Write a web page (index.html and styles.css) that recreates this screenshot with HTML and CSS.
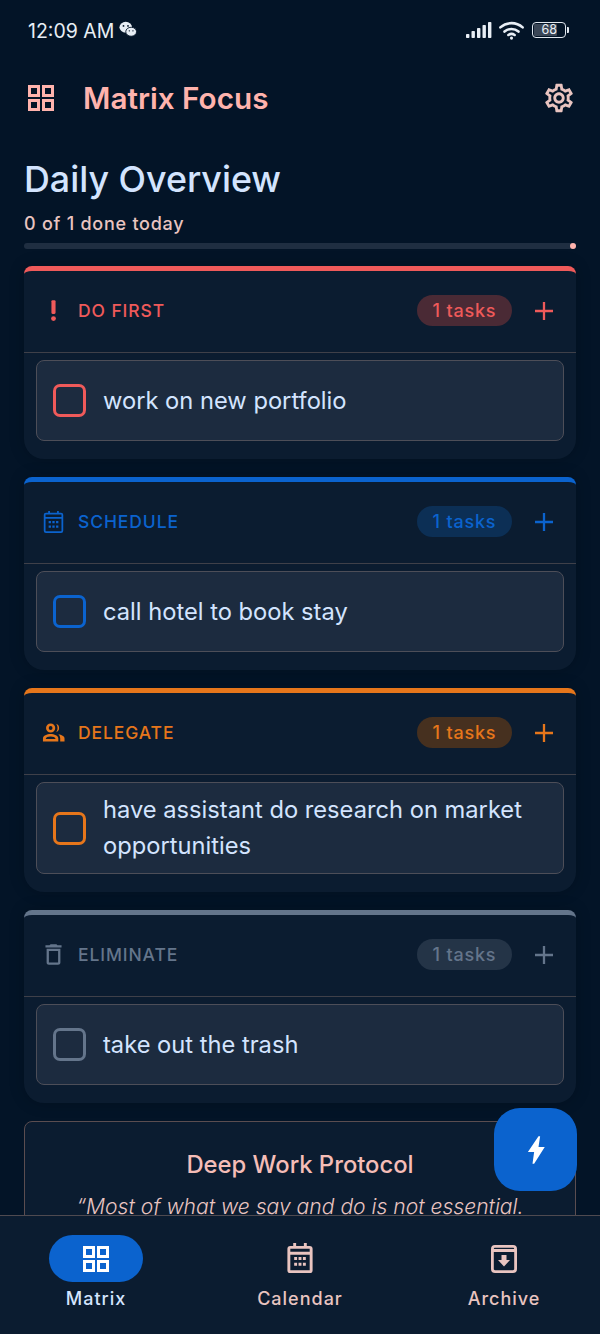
FILE: index.html
```html
<!DOCTYPE html>
<html lang="en">
<head>
<meta charset="utf-8">
<title>Matrix Focus</title>
<link rel="stylesheet" href="styles.css">
</head>
<body>
<div class="app">
  <div class="status">
    <div class="status-left">
      <span class="clock">12:09 AM</span>
      <svg class="wechat" viewBox="0 0 20 18"><ellipse cx="7.500" cy="6.500" rx="7" ry="6" fill="currentColor"/><ellipse cx="13.500" cy="11.500" rx="6" ry="5" fill="currentColor" stroke="#031427" stroke-width="1"/><circle cx="5" cy="5" r="1" fill="#031427"/><circle cx="10" cy="5" r="1" fill="#031427"/><circle cx="11.500" cy="10.500" r=".8" fill="#031427"/><circle cx="15.500" cy="10.500" r=".8" fill="#031427"/></svg>
    </div>
    <div class="status-right">
      <svg class="signal" viewBox="0 0 26 16"><rect x="0" y="12" width="3.400" height="4" rx=".8"/><rect x="5.500" y="9" width="3.400" height="7" rx=".8"/><rect x="11" y="6" width="3.400" height="10" rx=".8"/><rect x="16.500" y="3" width="3.400" height="13" rx=".8"/><rect x="22" y="0" width="3.400" height="16" rx=".8"/></svg>
      <svg class="wifi" viewBox="0 0 24 18" fill="none" stroke="currentColor" stroke-width="2.500" stroke-linecap="round"><path d="M1.300 6C7.500 .6 16.500 .6 22.700 6"/><path d="M5.300 10c3.800-3.300 9.600-3.300 13.400 0"/><path d="M9 13.300c1.900-1.300 4.100-1.300 6 0"/><circle cx="12" cy="16.300" r="1.500" fill="currentColor" stroke="none"/></svg>
      <div class="battery"><span class="battery-level">68</span></div>
      <span class="battery-tip"></span>
    </div>
  </div>

  <header class="topbar">
    <svg class="logo" viewBox="0 0 28 28"><path fill-rule="evenodd" d="M1 1h12v12H1zm3 3v6h6V4zM15 1h12v12H15zm3 3v6h6V4zM1 15h12v12H1zm3 3v6h6v-6zM15 15h12v12H15zm3 3v6h6v-6z"/></svg>
    <h1 class="brand">Matrix Focus</h1>
    <svg class="gear" viewBox="0 0 24 24"><path d="M19.430 12.980c.04-.32.07-.64.07-.98 0-.34-.03-.66-.07-.98l2.110-1.650c.19-.15.24-.42.12-.64l-2-3.460c-.09-.16-.26-.25-.44-.25-.06 0-.12.01-.17.03l-2.490 1c-.52-.4-1.080-.73-1.690-.98l-.38-2.650C14.460 2.180 14.250 2 14 2h-4c-.25 0-.46.18-.49.42l-.38 2.650c-.61.25-1.170.59-1.690.98l-2.490-1c-.06-.02-.12-.03-.18-.03-.17 0-.34.09-.43.25l-2 3.460c-.13.22-.07.49.12.64l2.110 1.650c-.04.32-.07.65-.07.98 0 .33.03.66.07.98l-2.110 1.650c-.19.15-.24.42-.12.64l2 3.460c.09.16.26.25.44.25.06 0 .12-.01.17-.03l2.490-1c.52.4 1.080.73 1.690.98l.38 2.650c.03.24.24.42.49.42h4c.25 0 .46-.18.49-.42l.38-2.650c.61-.25 1.170-.59 1.690-.98l2.490 1c.06.02.12.03.18.03.17 0 .34-.09.43-.25l2-3.460c.12-.22.07-.49-.12-.64l-2.110-1.650zm-1.980-1.710c.04.31.05.52.05.73 0 .21-.02.43-.05.73l-.14 1.130.89.7 1.080.84-.7 1.210-1.270-.51-1.040-.42-.9.68c-.43.32-.84.56-1.250.73l-1.060.43-.16 1.130-.2 1.350h-1.400l-.19-1.350-.16-1.130-1.060-.43c-.43-.18-.83-.41-1.230-.71l-.91-.7-1.060.43-1.270.51-.7-1.210 1.080-.84.89-.7-.14-1.130c-.03-.31-.05-.54-.05-.74s.02-.43.05-.73l.14-1.130-.89-.7-1.080-.84.7-1.210 1.270.51 1.040.42.9-.68c.43-.32.84-.56 1.250-.73l1.060-.43.16-1.130.2-1.350h1.390l.19 1.350.16 1.130 1.060.43c.43.18.83.41 1.230.71l.91.7 1.060-.43 1.270-.51.7 1.210-1.070.85-.89.7.14 1.130zM12 8c-2.210 0-4 1.790-4 4s1.790 4 4 4 4-1.790 4-4-1.790-4-4-4zm0 6c-1.100 0-2-.9-2-2s.9-2 2-2 2 .9 2 2-.9 2-2 2z"/></svg>
  </header>

  <main class="content">
    <h2 class="overview">Daily Overview</h2>
    <p class="done">0 of 1 done today</p>
    <div class="progress"><span class="progress-dot"></span></div>

    <section class="card red">
      <div class="card-head">
        <svg class="cat-icon" viewBox="0 0 20 20"><rect x="8.200" y="1" width="3.600" height="12" rx="1"/><circle cx="10" cy="17" r="2.100"/></svg>
        <span class="cat-title">DO FIRST</span>
        <span class="count">1 tasks</span>
        <svg class="plus" viewBox="0 0 20 20"><path d="M10 1v18M1 10h18"/></svg>
      </div>
      <div class="task"><span class="check"></span><span class="task-text">work on new portfolio</span></div>
    </section>

    <section class="card blue">
      <div class="card-head">
        <svg class="cat-icon" viewBox="0 0 24 26"><path fill-rule="evenodd" d="M6 1h2v2h8V1h2v2h2.500A2.500 2.500 0 0 1 23 5.500v18a2.500 2.500 0 0 1-2.500 2.500h-17A2.500 2.500 0 0 1 1 23.500v-18A2.500 2.500 0 0 1 3.500 3H6zM3.500 5c-.3 0-.5.2-.5.5V8h18V5.500c0-.3-.2-.5-.5-.5zM3 10v13.500c0 .3.2.5.5.5h17c.3 0 .5-.2.5-.5V10zm3.500 2.500h2.600v2.600H6.500zm4.200 0h2.600v2.600h-2.600zm4.200 0h2.600v2.600h-2.600zM6.500 17.500h2.600v2.600H6.500zm4.200 0h2.600v2.600h-2.600zm4.200 0h2.600v2.600h-2.600z"/></svg>
        <span class="cat-title">SCHEDULE</span>
        <span class="count">1 tasks</span>
        <svg class="plus" viewBox="0 0 20 20"><path d="M10 1v18M1 10h18"/></svg>
      </div>
      <div class="task"><span class="check"></span><span class="task-text">call hotel to book stay</span></div>
    </section>

    <section class="card orange">
      <div class="card-head">
        <svg class="cat-icon" viewBox="0 0 24 20"><path fill-rule="evenodd" d="M9 .5a4.800 4.800 0 1 1 0 9.600A4.800 4.800 0 0 1 9 .5zm0 2.800a2 2 0 1 0 0 4 2 2 0 0 0 0-4zM9 11.500c3.800 0 8 1.900 8 4.500v3.500H1V16c0-2.600 4.200-4.500 8-4.500zm0 2.800c-2.700 0-4.700 1-5 1.900v.6h10v-.6c-.3-.9-2.300-1.900-5-1.900z"/><path d="M14.800.9a4.700 4.700 0 0 1 0 8.800c.9-1.200 1.400-2.800 1.400-4.400s-.5-3.200-1.400-4.400zM17 11.800c3.300.5 6.500 1.900 6.500 4.300v3.400H19V16c0-1.600-.8-3.100-2-4.200z"/></svg>
        <span class="cat-title">DELEGATE</span>
        <span class="count">1 tasks</span>
        <svg class="plus" viewBox="0 0 20 20"><path d="M10 1v18M1 10h18"/></svg>
      </div>
      <div class="task"><span class="check"></span><span class="task-text">have assistant do research on market opportunities</span></div>
    </section>

    <section class="card gray">
      <div class="card-head">
        <svg class="cat-icon" viewBox="2 2 20 20"><path d="M6 19c0 1.100.9 2 2 2h8c1.100 0 2-.9 2-2V7H6v12zM8 9h8v10H8V9zm7.500-5l-1-1h-5l-1 1H5v2h14V4z"/></svg>
        <span class="cat-title">ELIMINATE</span>
        <span class="count">1 tasks</span>
        <svg class="plus" viewBox="0 0 20 20"><path d="M10 1v18M1 10h18"/></svg>
      </div>
      <div class="task"><span class="check"></span><span class="task-text">take out the trash</span></div>
    </section>

    <section class="protocol">
      <h3 class="protocol-title">Deep Work Protocol</h3>
      <p class="quote">“Most of what we say and do is not essential.</p>
    </section>
  </main>

  <button class="fab" type="button" aria-label="Focus">
    <svg viewBox="0 0 24 24"><path d="M10.500 23h-1.300l1.300-9.500H5.500L14 1h1.300l-1.300 8.500h5z"/></svg>
  </button>

  <nav class="nav">
    <div class="nav-item active">
      <span class="nav-pill"><svg class="nav-icon" viewBox="0 0 28 28"><path fill-rule="evenodd" d="M1 1h12v12H1zm3 3v6h6V4zM15 1h12v12H15zm3 3v6h6V4zM1 15h12v12H1zm3 3v6h6v-6zM15 15h12v12H15zm3 3v6h6v-6z"/></svg></span>
      <span class="nav-label">Matrix</span>
    </div>
    <div class="nav-item">
      <span class="nav-pill"><svg class="nav-icon tall" viewBox="0 0 28 32"><path fill-rule="evenodd" d="M7 0h3v3h8V0h3v3h3a3 3 0 0 1 3 3v22a3 3 0 0 1-3 3H4a3 3 0 0 1-3-3V6a3 3 0 0 1 3-3h3zM4 6v3h20V6zm0 6v16h20V12zm4 2.500h3v3H8zm4.500 0h3v3h-3zm4.500 0h3v3h-3zM8 20.500h3v3H8zm4.500 0h3v3h-3zm4.500 0h3v3h-3z"/></svg></span>
      <span class="nav-label">Calendar</span>
    </div>
    <div class="nav-item">
      <span class="nav-pill"><svg class="nav-icon" viewBox="0 0 28 28"><path fill-rule="evenodd" d="M5 0h18a4 4 0 0 1 4 4v20a4 4 0 0 1-4 4H5a4 4 0 0 1-4-4V4a4 4 0 0 1 4-4zM3.800 7v17c0 .7.500 1.200 1.200 1.200h18c.7 0 1.200-.5 1.200-1.200V7zM5 2.800c-.6 0-1.100.4-1.200 1.200h20.400c-.1-.8-.6-1.200-1.200-1.200zM11.500 10h5v5H20l-6 6.500L8 15h3.500z"/></svg></span>
      <span class="nav-label">Archive</span>
    </div>
  </nav>
</div>
</body>
</html>
```

FILE: styles.css
```css
* { box-sizing: border-box; }
html, body { margin: 0; padding: 0; }
body {
  width: 600px;
  height: 1334px;
  overflow: hidden;
  background: #031427;
  font-family: Inter, "Liberation Sans", sans-serif;
}
.app {
  position: relative;
  width: 600px;
  height: 1334px;
  display: flex;
  flex-direction: column;
  background: #031427;
}

/* status bar */
.status {
  flex: none;
  height: 60px;
  padding: 0 31px 0 28px;
  display: flex;
  align-items: center;
  justify-content: space-between;
  color: #e6edf5;
}
.status-left { display: flex; align-items: center; gap: 5px; }
.clock { margin-top: 2px; font-size: 19.500px; font-weight: 400; color: #e8eef5; }
.wechat { width: 18px; height: 17px; margin-bottom: 2px; color: #e8eef5; }
.status-right { display: flex; align-items: center; }
.signal { width: 26px; height: 16px; fill: #e8eef5; }
.wifi { width: 25px; height: 19px; margin-left: 7px; color: #e8eef5; }
.battery {
  width: 34px;
  height: 16px;
  margin-left: 8px;
  padding: 1px;
  border: 1.500px solid #e0e7ef;
  border-radius: 4px;
  display: flex;
}
.battery-level {
  width: 23px;
  background: #3a4656;
  border-radius: 1px;
  font-size: 12.500px;
  line-height: 11px;
  color: #e8eef5;
  text-align: right;
  flex: none;
}
.battery-tip {
  width: 2px;
  height: 6px;
  margin-left: 1px;
  background: #e0e7ef;
  border-radius: 0 1px 1px 0;
}

/* top bar */
.topbar {
  flex: none;
  height: 76px;
  padding: 0 24px 0 27px;
  display: flex;
  align-items: center;
}
.logo { width: 28px; height: 28px; fill: #ffb3ad; flex: none; }
.brand {
  margin: 0 0 0 28px;
  flex: 1;
  font-size: 29.700px;
  line-height: 36px;
  font-weight: 600;
  color: #ffb3ad;
}
.gear { width: 34px; height: 34px; fill: #e9c4c0; flex: none; }

/* scrolling content */
.content {
  flex: 1;
  min-height: 0;
  overflow: hidden;
  padding: 0 24px;
}
.overview {
  margin: 21px 0 0;
  font-size: 35.800px;
  line-height: 44px;
  font-weight: 500;
  color: #d3e4fe;
}
.done {
  margin: 11px 0 0;
  font-size: 18px;
  line-height: 24px;
  font-weight: 500;
  letter-spacing: 0.750px;
  color: #e9c4c0;
}
.progress {
  height: 6px;
  margin-top: 7px;
  background: #1f2e41;
  border-radius: 3px;
  display: flex;
  justify-content: flex-end;
}
.progress-dot {
  width: 6px;
  height: 6px;
  border-radius: 50%;
  background: #ffb3ad;
}

/* quadrant cards */
.card {
  margin-top: 18px;
  padding-bottom: 18px;
  background: #0b1c30;
  border-top: 5px solid var(--accent);
  border-radius: 8px 8px 20px 20px;
  color: var(--accent);
  box-shadow: 0 0 16px rgba(0, 0, 0, 0.2);
}
.progress + .card { margin-top: 17px; }
.red { --accent: #ef5a5a; --badge: #4a2a35; }
.blue { --accent: #0b63ce; --badge: #0c2f55; }
.orange { --accent: #e6761b; --badge: #46301f; }
.gray { --accent: #64758b; --badge: #243447; }
.card-head {
  height: 82px;
  padding: 0 22px 2px 18px;
  display: flex;
  align-items: center;
  border-bottom: 1.500px solid #3f4049;
}
.cat-icon { width: 23px; height: 23px; fill: currentColor; flex: none; }
.cat-title {
  margin-left: 13px;
  flex: 1;
  font-size: 17.500px;
  line-height: 24px;
  font-weight: 500;
  letter-spacing: 0.900px;
}
.count {
  width: 95px;
  height: 31px;
  border-radius: 16px;
  background: var(--badge);
  font-size: 18px;
  font-weight: 500;
  line-height: 31px;
  letter-spacing: 0.800px;
  text-align: center;
  flex: none;
}
.plus {
  width: 20px;
  height: 20px;
  margin-left: 22px;
  fill: none;
  stroke: currentColor;
  stroke-width: 2.300;
  flex: none;
}
.task {
  min-height: 81px;
  margin: 7px 12px 0;
  padding: 9px 16px;
  background: #1c2b3f;
  border: 1.500px solid #4d4e58;
  border-radius: 8px;
  display: flex;
  align-items: center;
  gap: 17px;
}
.check {
  width: 33px;
  height: 33px;
  flex: none;
  border: 3px solid var(--accent);
  border-radius: 7px;
}
.task-text {
  font-size: 23.700px;
  line-height: 36px;
  font-weight: 400;
  color: #d3e4fe;
}

/* protocol */
.protocol {
  height: 200px;
  margin-top: 18px;
  padding: 28px 16px 0;
  background: #0b1c30;
  border: 1.500px solid #5b4d50;
  border-radius: 8px;
  text-align: center;
}
.protocol-title {
  margin: 0;
  font-size: 23.800px;
  line-height: 30px;
  font-weight: 500;
  color: #f5bdb7;
}
.quote {
  margin: 12px -16px 0;
  font-size: 21.100px;
  line-height: 30px;
  font-style: italic;
  font-weight: 300;
  color: #e9c4c0;
  white-space: nowrap;
}

/* floating action */
.fab {
  position: absolute;
  right: 23px;
  bottom: 143px;
  width: 83px;
  height: 83px;
  padding: 0;
  border: 0;
  border-radius: 26px;
  background: #0b63ce;
  display: flex;
  align-items: center;
  justify-content: center;
}
.fab svg { width: 30px; height: 30px; fill: #fff; }

/* bottom nav */
.nav {
  flex: none;
  height: 119px;
  padding-top: 19px;
  background: #0b1c30;
  border-top: 1.500px solid #4f4a50;
  display: flex;
  justify-content: center;
  gap: 110px;
}
.nav-item {
  width: 94px;
  display: flex;
  flex-direction: column;
  align-items: center;
  color: #e9c4c0;
}
.nav-pill {
  width: 94px;
  height: 47px;
  border-radius: 24px;
  display: flex;
  align-items: center;
  justify-content: center;
}
.active .nav-pill { background: #0b63ce; }
.active { color: #d3e4fe; }
.nav-icon { width: 28px; height: 28px; fill: currentColor; }
.nav-icon.tall { height: 31px; }
.active .nav-icon { fill: #fff; }
.nav-label {
  margin-top: 5px;
  font-size: 18px;
  line-height: 24px;
  font-weight: 500;
  letter-spacing: 1px;
  white-space: nowrap;
}
```
